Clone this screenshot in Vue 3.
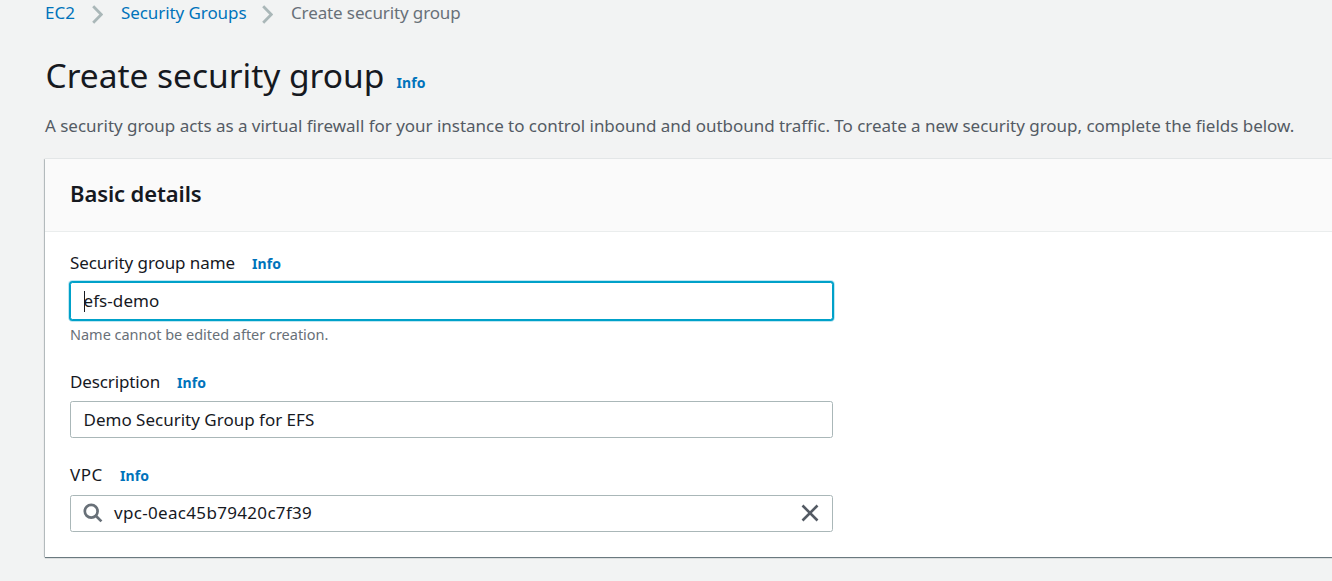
<script setup>
import { ref } from 'vue'

const name = ref('efs-demo')
const description = ref('Demo Security Group for EFS')
const vpc = ref('vpc-0eac45b79420c7f39')
</script>

<template>
  <main class="page">
    <nav class="crumbs">
      <a class="crumb c1">EC2</a>
      <svg class="chevron" width="11" height="19" viewBox="0 0 11 19"><path d="M1.2 1.2 9.3 9.5 1.2 17.8" /></svg>
      <a class="crumb c2">Security Groups</a>
      <svg class="chevron" width="11" height="19" viewBox="0 0 11 19"><path d="M1.2 1.2 9.3 9.5 1.2 17.8" /></svg>
      <span class="crumb current">Create security group</span>
    </nav>

    <header class="heading">
      <h1>Create security group</h1>
      <a class="info">Info</a>
    </header>
    <p class="intro">A security group acts as a virtual firewall for your instance to control inbound and outbound traffic. To create a new security group, complete the fields below.</p>

    <section class="card">
      <div class="card-head"><h2>Basic details</h2></div>
      <div class="card-body">
        <div class="field first">
          <div class="label"><span class="l1">Security group name</span><a class="info">Info</a></div>
          <div class="input focused"><i class="caret"></i><span class="v1">{{ name }}</span></div>
          <div class="hint"><span>Name cannot be edited after creation.</span></div>
        </div>
        <div class="field second">
          <div class="label"><span class="l2">Description</span><a class="info">Info</a></div>
          <div class="input"><span class="v2">{{ description }}</span></div>
        </div>
        <div class="field">
          <div class="label"><span class="l3">VPC</span><a class="info">Info</a></div>
          <div class="input vpc">
            <svg class="search" width="20" height="20" viewBox="0 0 20 20"><circle cx="8.2" cy="8.2" r="6.4" /><path d="M12.8 12.8 18.4 18.4" /></svg>
            <span class="v3">{{ vpc }}</span>
            <svg class="clear" width="18" height="18" viewBox="0 0 18 18"><path d="M1.5 1.5 16.5 16.5M16.5 1.5 1.5 16.5" /></svg>
          </div>
        </div>
      </div>
    </section>
  </main>
</template>

<style>
body {
  margin: 0;
  background: #f2f3f3;
  overflow: hidden;
}
</style>

<style scoped>
.page {
  box-sizing: border-box;
  width: 1332px;
  height: 581px;
  padding-left: 45px;
  overflow: hidden;
  background: #f2f3f3;
  color: #16191f;
  font: 17px/26px "Noto Sans", sans-serif;
  white-space: nowrap;
}
.crumbs {
  display: flex;
  align-items: center;
  height: 26px;
}
.crumb { flex: none; color: #0073bb; }
.c1 { width: 47px; }
.c2 { width: 141px; letter-spacing: -.08px; }
.chevron + .crumb { margin-left: 18px; }
.crumb.current { color: #687078; letter-spacing: -.12px; }
.chevron { flex: none; margin-top: 2px; }
.chevron path { fill: none; stroke: #aab7b8; stroke-width: 2.8; }
.heading {
  display: flex;
  align-items: baseline;
  height: 50px;
  margin-top: 24px;
}
h1 {
  width: 351px;
  margin: 0;
  padding-left: .5px;
  font-size: 33.5px;
  font-weight: 400;
  line-height: 50px;
  letter-spacing: -.02px;
}
.info {
  color: #0073bb;
  font-size: 14px;
  font-weight: 700;
  letter-spacing: .1px;
}
.intro { margin: 13px 0 0; color: #545b64; letter-spacing: -.026px; }
.card {
  height: 398px;
  margin-top: 20px;
  background: #fff;
  box-shadow: 0 1px 1px rgba(0, 28, 36, .55), -1px 0 1px rgba(0, 28, 36, .18), 0 -1px 0 #eaeded;
}
.card-head {
  box-sizing: border-box;
  height: 73px;
  padding: 19px 25px;
  background: #fafafa;
  border-bottom: 1px solid #eaeded;
}
h2 {
  margin: 0;
  font-size: 22px;
  font-weight: 600;
  line-height: 30px;
  letter-spacing: -.11px;
}
.card-body { padding: 18px 25px; }
.label {
  display: flex;
  align-items: baseline;
  height: 26px;
}
.l1 { width: 182px; letter-spacing: -.08px; }
.l2 { width: 107px; letter-spacing: -.12px; }
.l3 { width: 50px; letter-spacing: .5px; }
.input {
  position: relative;
  box-sizing: border-box;
  display: flex;
  align-items: center;
  width: 763px;
  height: 37px;
  margin-top: 6px;
  padding: 0 12.5px;
  border: 1px solid #aab7b8;
  border-radius: 2.5px;
  background: #fff;
}
.input.focused {
  height: 38px;
  padding-bottom: 1px;
  border-color: #00a1c9;
  box-shadow: 0 0 0 1px #00a1c9, 0 0 0 2px #bfe7f2;
}
.input.vpc { margin-top: 7px; padding: 0 13px 1px 12px; }
.caret {
  position: absolute;
  left: 13px;
  top: 8px;
  width: 1px;
  height: 21px;
  background: #16191f;
}
.v1 { letter-spacing: .08px; }
.v3 { letter-spacing: .32px; }
.hint {
  height: 20px;
  margin-top: 4px;
  color: #687078;
  font-size: 14.5px;
  line-height: 20px;
  letter-spacing: -.02px;
}
.first { margin-bottom: 25px; }
.second { margin-bottom: 24px; }
.search { flex: none; margin-right: 11px; }
.search circle, .search path { fill: none; stroke: #687078; stroke-width: 2.7; }
.clear { flex: none; margin: 0 0 0 auto; }
.clear path { fill: none; stroke: #545b64; stroke-width: 2.6; }
</style>
